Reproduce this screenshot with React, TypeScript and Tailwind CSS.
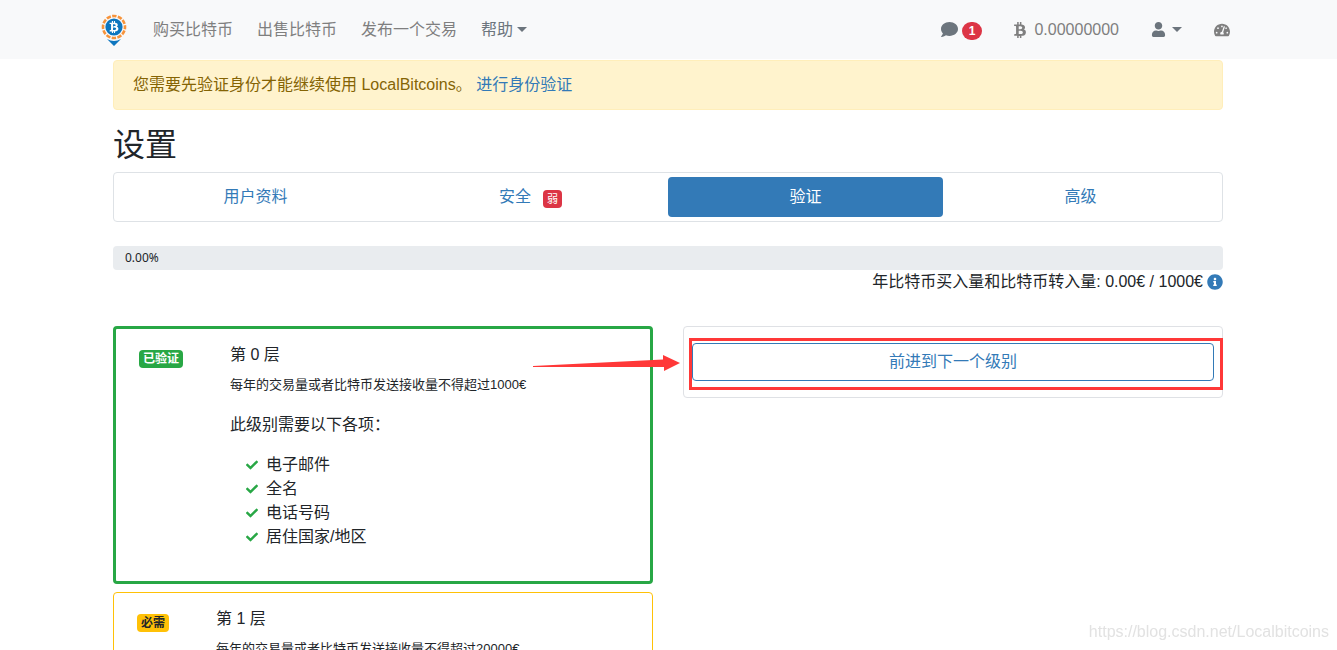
import type { ReactNode } from 'react';
import {
  FaBtc,
  FaCheck,
  FaComment,
  FaInfoCircle,
  FaTachometerAlt,
  FaUser,
} from 'react-icons/fa';

function Logo() {
  return (
    <svg viewBox="0 0 26 32" className="h-8 w-[26px]" aria-hidden="true">
      <path d="M6 25 Q13 29 20 25 L13 32 Z" fill="#0d76bf" />
      <circle cx="13" cy="13" r="11" fill="none" stroke="#f7933a" strokeWidth="2.6" strokeDasharray="4.4 1.36" strokeDashoffset="2.2" />
      <circle cx="13" cy="13" r="8.6" fill="#0d76bf" />
      <FaBtc x={7} y={7} size={12} color="#ffffff" />
    </svg>
  );
}

function Caret() {
  return (
    <span className="inline-block border-x-[5px] border-t-[5px] border-x-transparent border-t-current" />
  );
}

const navLinks = ['购买比特币', '出售比特币', '发布一个交易'];

function Header() {
  return (
    <header className="bg-[#f8f9fa] text-[#7f7f7f]">
      <div className="mx-auto flex h-[59px] max-w-[1141px] items-center justify-between pr-[9px] pl-[3px]">
        <nav className="flex items-center gap-6">
          <a href="#home" aria-label="LocalBitcoins" className="mr-0.5">
            <Logo />
          </a>
          {navLinks.map((label) => (
            <a key={label} href="#nav">
              {label}
            </a>
          ))}
          <button type="button" className="flex items-center gap-1 text-[#6c757d]">
            帮助
            <Caret />
          </button>
        </nav>
        <div className="flex items-center gap-8 text-[#6c757d]">
          <a href="#messages" className="flex items-center gap-1" aria-label="消息">
            <FaComment size={17} />
            <span className="mt-0.5 rounded-full bg-[#dc3545] px-[7px] text-xs leading-[18px] font-bold text-white">
              1
            </span>
          </a>
          <a href="#wallet" className="flex items-center gap-2 text-[#7f7f7f]">
            <FaBtc className="h-4 w-3" />
            0.00000000
          </a>
          <button type="button" className="flex items-center gap-1.5" aria-label="账户">
            <FaUser size={15} />
            <Caret />
          </button>
          <a href="#dashboard" aria-label="仪表板" className="text-[#7f7f7f]">
            <FaTachometerAlt size={16} />
          </a>
        </div>
      </div>
    </header>
  );
}

function Tabs() {
  const base = 'flex h-10 flex-1 items-center justify-center rounded';
  return (
    <nav className="mt-2 flex rounded border border-[#dee2e6] p-1 text-[#337ab7]">
      <a href="#profile" className={base}>
        用户资料
      </a>
      <a href="#security" className={base}>
        安全
        <span className="mt-1 ml-3 rounded bg-[#dc3545] px-1 text-[11px] leading-[18px] text-white">
          弱
        </span>
      </a>
      <a href="#verification" aria-current="page" className={`${base} bg-[#337ab7] text-white`}>
        验证
      </a>
      <a href="#advanced" className={base}>
        高级
      </a>
    </nav>
  );
}

function Badge({ className, children }: { className: string; children: ReactNode }) {
  return (
    <span className={`rounded px-1 text-xs leading-[18px] font-bold ${className}`}>
      {children}
    </span>
  );
}

const requirements = ['电子邮件', '全名', '电话号码', '居住国家/地区'];

export default function App() {
  return (
    <div className="bg-white font-['Liberation_Sans','Noto_Sans_CJK_SC',sans-serif] text-base leading-6 text-[#212529]">
      <Header />
      <main className="mx-auto max-w-[1141px] pt-px pr-4 pl-[15px]">
        <div role="alert" className="rounded border border-[#ffeeba] bg-[#fff3cd] px-[19px] py-3 text-[#856404]">
          您需要先验证身份才能继续使用 LocalBitcoins。{' '}
          <a href="#verify" className="text-[#337ab7]">
            进行身份验证
          </a>
        </div>

        <h1 className="mt-4 text-[32px] leading-[38px]">设置</h1>
        <Tabs />

        <div
          role="progressbar"
          aria-valuenow={0}
          aria-valuemin={0}
          aria-valuemax={100}
          className="mt-6 rounded bg-[#e9ecef] px-3 font-['Noto_Sans',sans-serif] text-xs leading-6"
        >
          0.00%
        </div>
        <p className="flex items-center justify-end gap-1">
          年比特币买入量和比特币转入量: 0.00€ / 1000€
          <FaInfoCircle size={16} className="text-[#337ab7]" />
        </p>

        <div className="mt-8 grid grid-cols-2 items-start gap-[30px]">
          <div className="flex flex-col gap-2">
            <section className="flex rounded border-[3px] border-[#28a745] px-[23px] pt-[14px] pb-8">
              <div className="flex w-[91px] shrink-0 items-start pt-[7px]">
                <Badge className="bg-[#28a745] text-white">已验证</Badge>
              </div>
              <div>
                <h2>第 0 层</h2>
                <p className="mt-1.5 text-[13px] leading-6">每年的交易量或者比特币发送接收量不得超过1000€</p>
                <p className="mt-4">此级别需要以下各项：</p>
                <ul className="mt-4 pl-4">
                  {requirements.map((item) => (
                    <li key={item} className="flex items-center gap-2">
                      <FaCheck size={12} className="text-[#28a745]" />
                      {item}
                    </li>
                  ))}
                </ul>
              </div>
            </section>
            <section className="flex rounded border border-[#ffc107] px-[23px] pt-[14px] pb-8">
              <div className="flex w-[79px] shrink-0 items-start pt-[7px]">
                <Badge className="bg-[#ffc107]">必需</Badge>
              </div>
              <div>
                <h2>第 1 层</h2>
                <p className="mt-1.5 text-[13px] leading-6">每年的交易量或者比特币发送接收量不得超过20000€</p>
              </div>
            </section>
          </div>

          <section className="relative rounded border border-[#dfe1e5] px-2 py-4">
            <button
              type="button"
              className="block h-[38px] w-full rounded border border-[#337ab7] text-[#337ab7]"
            >
              前进到下一个级别
            </button>
            <div className="pointer-events-none absolute top-[11px] -right-px bottom-[7px] left-[5px] border-[3px] border-[#ff3838]" />
            <svg
              viewBox="0 0 147 16"
              className="pointer-events-none absolute top-7 right-full mr-1 h-4 w-[147px]"
              aria-hidden="true"
            >
              <path d="M0 11 L130 4.5 L130 0 L147 8 L131 16 L131 12 L0 12 Z" fill="#ff3838" />
            </svg>
          </section>
        </div>
      </main>
      <div className="pointer-events-none fixed right-2 bottom-1.5 text-[#e2e2e2]">
        https://blog.csdn.net/Localbitcoins
      </div>
    </div>
  );
}
